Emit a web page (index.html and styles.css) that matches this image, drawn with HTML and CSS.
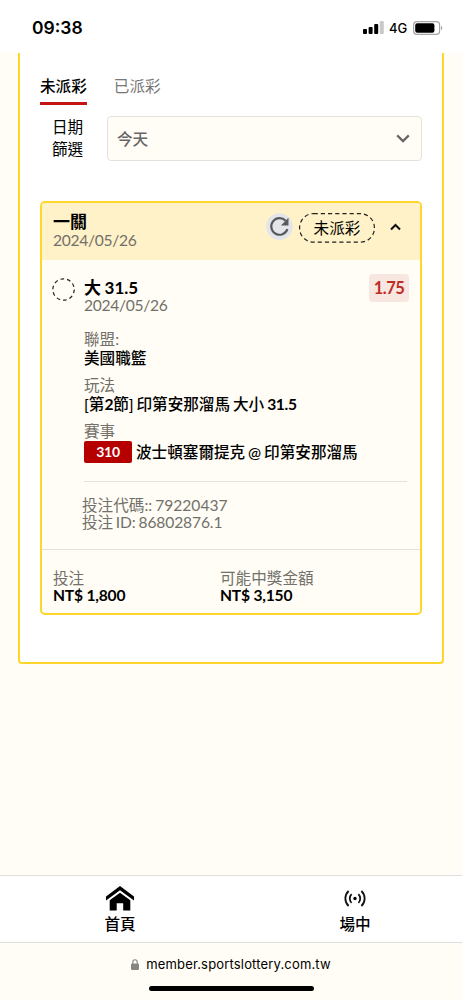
FILE: index.html
```html
<!DOCTYPE html>
<html lang="zh-Hant">
<head>
<meta charset="utf-8">
<title>未派彩</title>
<link rel="stylesheet" href="styles.css">
</head>
<body>
<div class="screen">
  <header class="status">
    <span class="clock">09:38</span>
    <svg class="signal" width="22" height="14" viewBox="0 0 22 14">
      <rect x="0" y="8" width="4" height="5" rx="1"/>
      <rect x="5.6" y="6" width="4" height="7" rx="1"/>
      <rect x="11.2" y="3" width="4" height="10" rx="1"/>
      <rect x="16.8" y="0" width="4" height="13" rx="1" fill="#c8c8c8"/>
    </svg>
    <span class="network">4G</span>
    <svg class="battery" width="30" height="14" viewBox="0 0 30 14">
      <rect x=".6" y=".6" width="26" height="12.8" rx="3.4" fill="none" stroke="#a6a6a6" stroke-width="1.2"/>
      <rect x="2.2" y="2.2" width="19.2" height="9.6" rx="2"/>
      <path d="M28 4.8c1.8.7 1.8 3.7 0 4.4z" fill="#a6a6a6"/>
    </svg>
  </header>
  <main class="page">
    <section class="panel">
      <nav class="tabs">
        <a class="tab active">未派彩</a>
        <a class="tab">已派彩</a>
      </nav>
      <div class="filter">
        <div class="filter-label">日期<br>篩選</div>
        <div class="select">
          <span>今天</span>
          <svg width="14" height="9" viewBox="0 0 14 9"><path d="M1.2 1.4 7 7.1l5.800-5.700" fill="none" stroke="#666" stroke-width="2.200"/></svg>
        </div>
      </div>
      <article class="ticket">
        <div class="ticket-head">
          <div class="head-title">
            <div class="title">一關</div>
            <div class="date">2024/05/26</div>
          </div>
          <svg class="refresh" width="27" height="27" viewBox="0 0 27 27">
            <circle cx="13.500" cy="13.500" r="13.300" fill="#e4e5e8"/>
            <path d="M19.600 7.700A8.300 8.300 0 1 0 21.400 16.200" fill="none" stroke="#58595b" stroke-width="2.200"/>
            <path d="M22.500 4.800v7.600h-7.600z" fill="#58595b"/>
          </svg>
          <div class="pill">
            <svg class="pill-outline" width="76" height="30" viewBox="0 0 76 30"><rect x=".6" y=".6" width="74.800" height="28.600" rx="14" fill="none" stroke="#222" stroke-width="1.200" stroke-dasharray="4.200 3"/></svg>
            <span>未派彩</span>
          </div>
          <svg class="collapse" width="11" height="8" viewBox="0 0 11 8"><path d="M1 6.500 5.500 2 10 6.500" fill="none" stroke="#111" stroke-width="2.100"/></svg>
        </div>
        <div class="bet">
          <svg class="dot" width="23" height="23" viewBox="0 0 23 23"><circle cx="11.500" cy="11.500" r="10.700" fill="none" stroke="#222" stroke-width="1.200" stroke-dasharray="3.700 3.020"/></svg>
          <div class="bet-body">
            <div class="bet-top">
              <div>
                <div class="title">大 31.5</div>
                <div class="date">2024/05/26</div>
              </div>
              <span class="odds">1.75</span>
            </div>
            <dl class="details">
              <dt>聯盟:</dt>
              <dd>美國職籃</dd>
              <dt>玩法</dt>
              <dd>[第<b>2</b>節] 印第安那溜馬 大小 <b>31.5</b></dd>
              <dt>賽事</dt>
              <dd class="match"><span class="code">310</span><span>波士頓塞爾提克 @ 印第安那溜馬</span></dd>
            </dl>
            <div class="ids">
              <div>投注代碼:: 79220437</div>
              <div class="bet-id">投注 ID: 86802876.1</div>
            </div>
          </div>
        </div>
        <div class="totals">
          <div class="stake"><div class="caption">投注</div><div class="amount">NT$ 1,800</div></div>
          <div><div class="caption">可能中獎金額</div><div class="amount">NT$ 3,150</div></div>
        </div>
      </article>
    </section>
  </main>
  <nav class="bottom-nav">
    <a class="nav-item">
      <svg width="28" height="25" viewBox="0 0 28 25"><path d="M14 0 28 10.500V14.400L14 4.200 0 14.400V10.500z"/><path d="M14 6.800 24.300 14.200V24.500H17.200V17.300H10.700V24.500H3.700V14.200z"/></svg>
      <span>首頁</span>
    </a>
    <a class="nav-item live">
      <svg width="22" height="25" viewBox="0 0 22 25"><circle cx="11" cy="12.500" r="1.700"/><path d="M7.600 8.100a6.200 6.200 0 0 0 0 8.800M14.400 8.100a6.200 6.200 0 0 1 0 8.800M4.600 5a10.300 10.300 0 0 0 0 15M17.400 5a10.300 10.300 0 0 1 0 15" fill="none" stroke="#111" stroke-width="1.800"/></svg>
      <span>場中</span>
    </a>
  </nav>
  <footer class="browser">
    <div class="address">
      <svg width="8" height="11" viewBox="0 0 8 11"><rect x="0" y="4.500" width="8" height="6.500" rx="1.200" fill="#858582"/><path d="M1.800 5V3a2.200 2.200 0 0 1 4.400 0v2" fill="none" stroke="#858582" stroke-width="1.100"/></svg>
      <span>member.sportslottery.com.tw</span>
    </div>
    <div class="home-bar"></div>
  </footer>
</div>
</body>
</html>
```
FILE: styles.css
```css
* { box-sizing: border-box; }
body {
  margin: 0;
  background: #fffdf5;
  color: #000;
  font-family: Lato, "Noto Sans CJK TC", sans-serif;
  font-size: 15.6px;
}
svg { display: block; flex: none; }
.screen { height: 1000px; display: flex; flex-direction: column; overflow: hidden; }

.status {
  height: 53px;
  background: #fff;
  display: flex;
  align-items: center;
  padding: 3px 19px 0 32px;
  font-family: Inter, sans-serif;
  flex: none;
}
.clock { font-size: 17.5px; font-weight: 600; margin: -1px auto 0 0; }
.signal { margin-right: 4px; }
.network { font-size: 13px; font-weight: 500; margin-right: 5px; width: 19px; }

.page { flex: 1; padding: 0 18px; min-height: 0; }
.panel {
  height: 611px;
  background: #fff;
  border: 2px solid #ffd62b;
  border-top: 0;
  border-radius: 0 0 4px 4px;
  padding: 20px 20px 0;
}
.tabs { display: flex; gap: 27px; height: 32px; }
.tab { line-height: 26px; height: 32px; color: #777; }
.tab.active { color: #000; font-weight: 500; border-bottom: 3px solid #c41414; }

.filter { display: flex; height: 45px; margin-top: 11px; }
.filter-label { width: 67px; padding: 0 24px 0 12px; line-height: 22px; white-space: nowrap; }
.select {
  flex: 1;
  border: 1px solid #e4e2dc;
  border-radius: 4px;
  background: #fffdf5;
  color: #666;
  font-weight: 500;
  display: flex;
  align-items: center;
  justify-content: space-between;
  padding: 0 11px 0 9px;
}
.select span { padding-bottom: 2px; }

.ticket {
  height: 414px;
  margin-top: 40px;
  border: 2px solid #ffd62b;
  border-radius: 5px;
  background: #fffdf5;
  display: flex;
  flex-direction: column;
  overflow: hidden;
}
.ticket-head {
  height: 57px;
  background: #fff1c8;
  display: flex;
  padding: 10px 19px 0 11px;
  flex: none;
}
.head-title { margin-right: auto; }
.title { font-size: 17px; line-height: 18px; font-weight: 700; word-spacing: -.6px; }
.bet .title { letter-spacing: 0; padding-top: 1px; line-height: 17px; }
.date { font-size: 15.6px; line-height: 19px; color: #72706a; letter-spacing: -.3px; }
.refresh { margin-right: 6px; }
.pill { position: relative; width: 76px; height: 30px; text-align: center; line-height: 31px; }
.pill-outline { position: absolute; inset: 0; }
.collapse { margin: 10px 0 0 15px; }

.bet { display: flex; height: 289px; padding: 18px 11px 0 10px; }
.dot { margin-right: 9px; }
.bet-body { flex: 1; }
.bet-top { display: flex; justify-content: space-between; height: 45px; }
.odds {
  width: 40px;
  height: 28px;
  margin-top: -4px;
  border-radius: 4px;
  background: #f8e6e0;
  color: #bd2c24;
  font-size: 16.5px;
  font-weight: 700;
  line-height: 28px;
  text-align: center;
  letter-spacing: -.5px;
}
.details { margin: 7px 0 0; word-spacing: -1px; }
.details b { letter-spacing: -.3px; }
.details dt { color: #72706a; height: 19px; line-height: 19px; }
.details dd { margin: 0 0 8px; height: 19px; line-height: 19px; font-weight: 500; white-space: nowrap; }
.details .match { display: flex; align-items: center; height: 23px; margin: 0; }
.code {
  width: 48px;
  height: 22px;
  margin: -1px 4px 0 0;
  border-radius: 2px;
  background: #b60000;
  color: #fff;
  font-size: 14px;
  font-weight: 700;
  line-height: 22px;
  text-align: center;
  letter-spacing: -.3px;
}
.ids {
  margin: 17px 2px 0 0;
  border-top: 1px solid #e5e2dc;
  padding-top: 15px;
  line-height: 17px;
  color: #72706a;
  word-spacing: -1px;
}
.ids div { margin-left: -2px; }
.ids .bet-id { letter-spacing: -.12px; }
.totals {
  flex: 1;
  border-top: 1px solid #e5e2dc;
  display: flex;
  padding: 20px 11px 0;
  line-height: 17px;
}
.stake { width: 167px; }
.caption { color: #72706a; }
.amount { font-weight: 700; letter-spacing: -.2px; }

.bottom-nav {
  height: 68px;
  flex: none;
  background: #fff;
  border-top: 1px solid #dedede;
  border-bottom: 1px solid #dedede;
  display: flex;
  justify-content: space-between;
  padding: 10px 87px 0 100px;
}
.nav-item { width: 40px; display: flex; flex-direction: column; align-items: center; font-weight: 500; line-height: 20px; gap: 3px; }

.browser { height: 57px; flex: none; display: flex; flex-direction: column; align-items: center; }
.address {
  display: flex;
  align-items: center;
  gap: 7px;
  height: 43px;
  font-family: Inter, sans-serif;
  font-size: 13px;
  padding-bottom: 1px;
  letter-spacing: .17px;
}
.home-bar { width: 165px; height: 5px; border-radius: 3px; background: #000; }
```
